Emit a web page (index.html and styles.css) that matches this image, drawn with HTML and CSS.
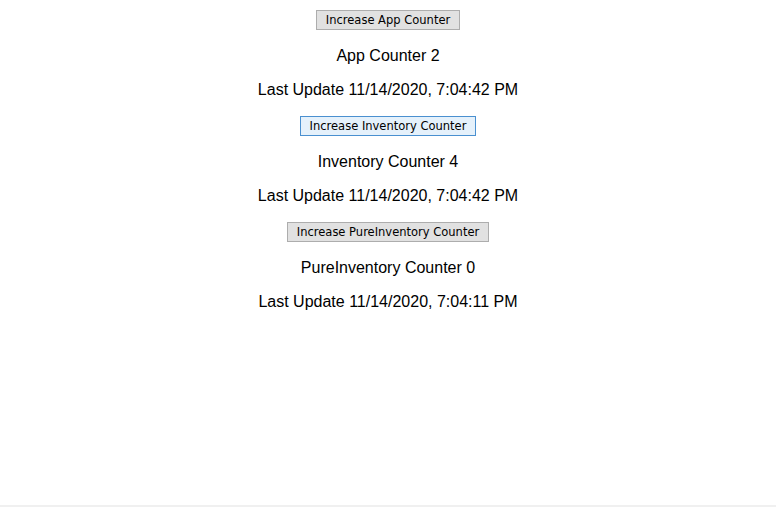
FILE: index.html
```html
<!DOCTYPE html>
<html lang="en">
<head>
<meta charset="utf-8">
<title>Counters</title>
<link rel="stylesheet" href="styles.css">
</head>
<body>
<div class="page">
  <main class="app">
    <section class="block">
      <div class="action"><button class="btn" type="button">Increase App Counter</button></div>
      <p class="line">App Counter 2</p>
      <p class="line">Last Update 11/14/2020, 7:04:42 PM</p>
    </section>
    <section class="block">
      <div class="action"><button class="btn btn-active" type="button">Increase Inventory Counter</button></div>
      <p class="line">Inventory Counter 4</p>
      <p class="line">Last Update 11/14/2020, 7:04:42 PM</p>
    </section>
    <section class="block">
      <div class="action"><button class="btn" type="button">Increase PureInventory Counter</button></div>
      <p class="line">PureInventory Counter 0</p>
      <p class="line">Last Update 11/14/2020, 7:04:11 PM</p>
    </section>
  </main>
  <div class="bottom-edge"></div>
</div>
</body>
</html>
```
FILE: styles.css
```css
html, body {
  margin: 0;
  padding: 0;
  background: #ffffff;
}

.page {
  min-height: 100vh;
  display: flex;
  flex-direction: column;
}

.app {
  padding-top: 9px;
  text-align: center;
  font-family: "Liberation Sans", Arial, sans-serif;
  font-size: 16px;
  color: #000000;
}

.action {
  height: 22px;
  display: flex;
  justify-content: center;
  align-items: center;
}

.line {
  margin: 16px 0;
  line-height: 18px;
}

.btn {
  font-family: "DejaVu Sans", Tahoma, sans-serif;
  font-size: 11.5px;
  color: #000000;
  background: #e1e1e1;
  border: 1px solid #adadad;
  padding: 1px 9px;
  line-height: 16px;
  height: 20px;
  margin: 0;
}

.btn-active {
  background: #e5f1fb;
  border-color: #4a90d0;
}

.bottom-edge {
  margin-top: auto;
  height: 2px;
  background: #f0f0f0;
}
```
